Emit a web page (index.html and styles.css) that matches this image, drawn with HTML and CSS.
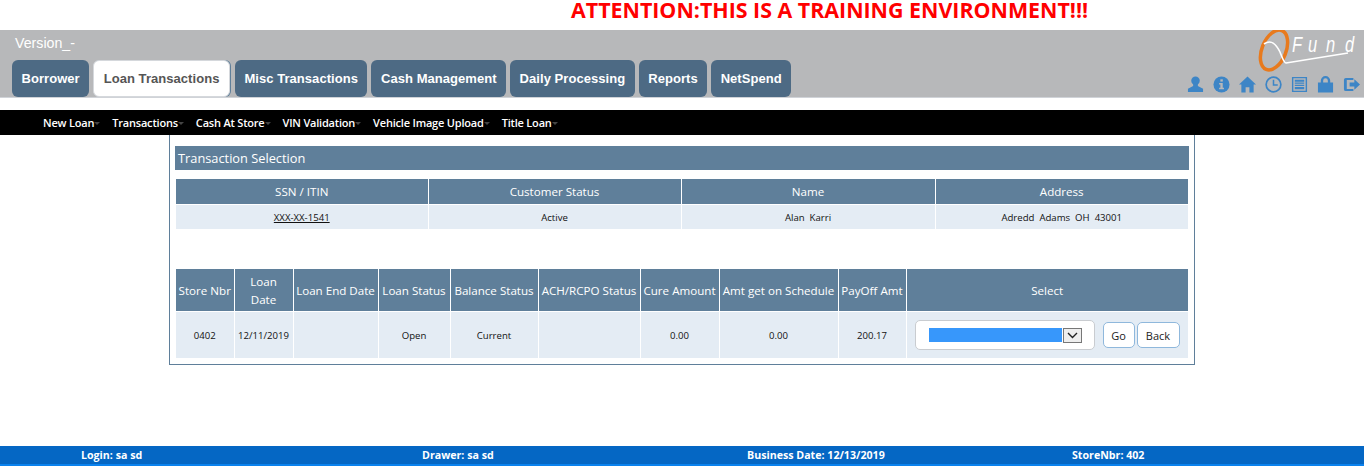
FILE: index.html
```html
<!DOCTYPE html>
<html lang="en">
<head>
    <meta charset="UTF-8">
    <title>QFund - Transaction Selection</title>
    <link rel="stylesheet" href="styles.css">
</head>
<body>
    <div class="banner">ATTENTION:THIS IS A TRAINING ENVIRONMENT!!!</div>
    <header class="top-bar">
        <div class="top-left">
            <div class="version">Version_-</div>
            <nav class="tabs">
                <a class="tab">Borrower</a>
                <a class="tab tab-active">Loan Transactions</a>
                <a class="tab">Misc Transactions</a>
                <a class="tab">Cash Management</a>
                <a class="tab">Daily Processing</a>
                <a class="tab">Reports</a>
                <a class="tab">NetSpend</a>
            </nav>
        </div>
        <div class="top-right">
            <svg class="logo" width="106" height="43" viewBox="0 0 106 43">
                <ellipse cx="16" cy="20" rx="12" ry="21" transform="rotate(22 16 20)" fill="none" stroke="#e87a1d" stroke-width="3.5"/>
                <path d="M6 14 C13 9 18 14 22 22 C24 27 26 33 28 33 L90 23" fill="none" stroke="#fff" stroke-width="1.6"/>
                <g class="logo-text">
                    <text x="0" y="22" transform="translate(34 0) scale(.75 1)">F</text>
                    <text x="0" y="22" transform="translate(50 0) scale(.75 1)">u</text>
                    <text x="0" y="22" transform="translate(68 0) scale(.75 1)">n</text>
                    <text x="0" y="22" transform="translate(87 0) scale(.75 1)">d</text>
                </g>
            </svg>
            <div class="icons">
                <svg width="17" height="17" viewBox="0 0 18 18"><circle cx="9" cy="5" r="4.5"/><path d="M6.5 8h5v2.500l5.500 3V17H1v-3.500l5.500-3z"/></svg>
                <svg width="17" height="17" viewBox="0 0 18 18"><circle cx="9" cy="9" r="8.500"/><rect x="7.800" y="3.500" width="2.600" height="2.400" fill="#b7b8ba"/><path d="M6.500 7.500h3.800v5h1.300V14H6.500v-1.500h1.300V9H6.500z" fill="#b7b8ba"/></svg>
                <svg width="17" height="17" viewBox="0 0 18 18"><path d="M9 .5L18 9h-2.500v8.500H11v-5.500H7v5.500H2.500V9H0z"/></svg>
                <svg width="17" height="17" viewBox="0 0 18 18"><circle cx="9" cy="9" r="7.800" fill="none" stroke="#3d85c6" stroke-width="1.800"/><path d="M8.200 4h1.600v4.800h3.700v1.600H8.200z"/></svg>
                <svg width="17" height="17" viewBox="0 0 18 18"><path fill-rule="evenodd" d="M1 1h16v16H1zM2.500 2.500v13h13v-13z"/><path d="M4 4h10v2H4zM4 7h10v1.200H4zM4 9.300h10v1.200H4zM4 11.600h10V14H4z"/></svg>
                <svg width="17" height="17" viewBox="0 0 18 18"><path fill-rule="evenodd" d="M1 7h3V5a5 5 0 0 1 10 0v2h3v10.500H1zM6.500 7h5V5a2.500 2.500 0 0 0-5 0z"/></svg>
                <svg width="17" height="17" viewBox="0 0 18 18"><path d="M3 2h8v2.200H4v9.600h7V16H3a2 2 0 0 1-2-2V4a2 2 0 0 1 2-2z"/><path d="M7 7h5V3.500L18 9l-6 5.500V11H7z"/></svg>
            </div>
        </div>
    </header>
    <nav class="sub-nav">
        <a class="sub-link">New Loan</a>
        <a class="sub-link">Transactions</a>
        <a class="sub-link">Cash At Store</a>
        <a class="sub-link">VIN Validation</a>
        <a class="sub-link">Vehicle Image Upload</a>
        <a class="sub-link">Title Loan</a>
    </nav>
    <main class="panel">
        <h1 class="panel-title">Transaction Selection</h1>
        <table class="grid customer-grid">
            <colgroup>
                <col class="c-ssn"><col class="c-cust"><col class="c-name"><col>
            </colgroup>
            <thead>
                <tr>
                    <th>SSN / ITIN</th>
                    <th>Customer Status</th>
                    <th>Name</th>
                    <th>Address</th>
                </tr>
            </thead>
            <tbody>
                <tr>
                    <td><a class="ssn">XXX-XX-1541</a></td>
                    <td>Active</td>
                    <td>Alan&nbsp;&nbsp;Karri</td>
                    <td>Adredd&nbsp;&nbsp;Adams&nbsp;&nbsp;OH&nbsp;&nbsp;43001</td>
                </tr>
            </tbody>
        </table>
        <table class="grid loan-grid">
            <colgroup>
                <col class="c-store"><col class="c-date"><col class="c-end"><col class="c-status"><col class="c-balance">
                <col class="c-ach"><col class="c-cure"><col class="c-amt"><col class="c-payoff"><col>
            </colgroup>
            <thead>
                <tr>
                    <th>Store Nbr</th>
                    <th>Loan<br>Date</th>
                    <th>Loan End Date</th>
                    <th>Loan Status</th>
                    <th>Balance Status</th>
                    <th>ACH/RCPO Status</th>
                    <th>Cure Amount</th>
                    <th>Amt get on Schedule</th>
                    <th>PayOff Amt</th>
                    <th>Select</th>
                </tr>
            </thead>
            <tbody>
                <tr>
                    <td>0402</td>
                    <td>12/11/2019</td>
                    <td></td>
                    <td>Open</td>
                    <td>Current</td>
                    <td></td>
                    <td>0.00</td>
                    <td>0.00</td>
                    <td>200.17</td>
                    <td>
                        <div class="actions">
                            <div class="select-box">
                                <span class="select-value"></span>
                                <span class="select-arrow"><svg width="11" height="7" viewBox="0 0 11 7"><path d="M1 1l4.500 4.500L10 1" fill="none" stroke="#222" stroke-width="1.400"/></svg></span>
                            </div>
                            <button class="btn btn-go">Go</button>
                            <button class="btn btn-back">Back</button>
                        </div>
                    </td>
                </tr>
            </tbody>
        </table>
    </main>
    <footer class="status-bar">
        <span>Login: sa sd</span>
        <span>Drawer: sa sd</span>
        <span>Business Date: 12/13/2019</span>
        <span>StoreNbr: 402</span>
    </footer>
</body>
</html>
```

FILE: styles.css
```css
html, body {
    height: 100%;
}
body {
    margin: 0;
    display: flex;
    flex-direction: column;
    font-family: "Open Sans", sans-serif;
    background: #fff;
    overflow: hidden;
}
.banner {
    height: 30px;
    padding-left: 571px;
    color: #f00;
    font-size: 21.4px;
    font-weight: 700;
    line-height: 20px;
    white-space: nowrap;
}
.top-bar {
    height: 68px;
    display: flex;
    justify-content: space-between;
    background: #b7b8ba;
    border-bottom: 1px solid #d0d3d8;
    box-sizing: border-box;
}
.top-left {
    padding-left: 12px;
}
.version {
    height: 30px;
    padding: 5px 0 0 3px;
    box-sizing: border-box;
    color: #fff;
    font-family: "Liberation Sans", sans-serif;
    font-size: 14.2px;
}
.tabs {
    display: flex;
    gap: 4px;
}
.tab {
    height: 37px;
    padding: 0 9.5px;
    display: flex;
    align-items: center;
    box-sizing: border-box;
    background: #4d6a84;
    border-radius: 6px;
    color: #fff;
    font-family: "Liberation Sans", sans-serif;
    font-size: 13px;
    font-weight: 700;
    letter-spacing: 0.05px;
}
.tab-active {
    margin-right: 1px;
    background: #fff;
    color: #555;
    border: 1px solid #d5d8dc;
    box-shadow: 1px 0 0 #5f7f9a;
}
.top-right {
    width: 178px;
    display: flex;
    flex-direction: column;
    align-items: flex-end;
}
.logo {
    display: block;
    flex: none;
}
.logo-text {
    fill: #fff;
    font-family: "Liberation Sans", sans-serif;
    font-size: 22px;
    font-style: italic;
}
.icons {
    display: flex;
    gap: 9px;
    padding: 3px 4px 0 0;
}
.icons svg {
    fill: #3d85c6;
}
.sub-nav {
    height: 25px;
    margin-top: 12px;
    padding-left: 43px;
    display: flex;
    align-items: center;
    gap: 18px;
    background: #000;
}
.sub-link {
    position: relative;
    color: #fff;
    font-size: 11px;
    font-weight: 600;
    letter-spacing: -0.2px;
}
.sub-link::after {
    content: "";
    position: absolute;
    left: 100%;
    top: 7px;
    border: 3px solid transparent;
    border-top-color: #444;
}
.panel {
    width: 1026px;
    height: 230px;
    margin-left: 169px;
    padding: 11px 5px 0;
    box-sizing: border-box;
    border: 1px solid #5f7f9a;
    border-top: 0;
}
.panel-title {
    height: 24px;
    margin: 0 0 9px;
    padding-left: 3px;
    background: #5f7f9a;
    color: #fff;
    font-size: 12.8px;
    font-weight: 400;
    line-height: 25px;
}
.grid {
    width: 1012px;
    margin-left: 1px;
    border-collapse: collapse;
    table-layout: fixed;
    font-size: 9.6px;
    color: #111;
}
.grid th {
    background: #5f7f9a;
    color: #fff;
    font-size: 11.6px;
    font-weight: 400;
    text-align: center;
    border-left: 1px solid #fff;
    border-bottom: 1px solid #fff;
    padding: 0 1px;
}
.grid td {
    background: #e4ecf4;
    text-align: center;
    border-left: 1px solid #fff;
    padding: 0;
}
.grid th:first-child, .grid td:first-child {
    border-left: 0;
}
.customer-grid {
    margin-bottom: 40px;
}
.customer-grid th {
    height: 25px;
}
.customer-grid td {
    height: 24px;
}
.ssn {
    color: #111;
    text-decoration: underline;
}
.loan-grid th {
    height: 41px;
    padding-top: 1px;
    line-height: 18px;
}
.loan-grid td {
    height: 46px;
}
.c-ssn { width: 252px; }
.c-cust { width: 253px; }
.c-name { width: 254px; }
.c-store { width: 58px; }
.c-date { width: 59px; }
.c-end { width: 85px; }
.c-status { width: 72px; }
.c-balance { width: 88px; }
.c-ach { width: 102px; }
.c-cure { width: 79px; }
.c-amt { width: 119px; }
.c-payoff { width: 68px; }
.actions {
    display: flex;
    align-items: center;
    padding-left: 8px;
}
.select-box {
    width: 180px;
    height: 30px;
    padding-left: 13px;
    display: flex;
    align-items: center;
    gap: 1px;
    box-sizing: border-box;
    background: #fff;
    border: 1px solid #c9ccd0;
    border-radius: 5px;
}
.select-value {
    width: 133px;
    height: 14px;
    background: #3797fb;
}
.select-arrow {
    width: 19px;
    height: 15px;
    display: flex;
    align-items: center;
    justify-content: center;
    box-sizing: border-box;
    background: #eee;
    border: 1px solid #777;
}
.btn {
    height: 26px;
    padding: 0;
    background: #fff;
    border: 1px solid #8fb8dc;
    border-radius: 5px;
    color: #222;
    font-family: "Open Sans", sans-serif;
    font-size: 11px;
}
.btn-go {
    width: 32px;
    margin: 0 2px 0 8px;
}
.btn-back {
    width: 43px;
}
.status-bar {
    margin-top: auto;
    height: 20px;
    display: grid;
    grid-template-columns: 341px 325px 325px 1fr;
    padding-left: 81px;
    align-items: center;
    box-sizing: border-box;
    background: #0567c4;
    border-bottom: 2px solid #0a82ee;
    color: #fff;
    font-size: 10.65px;
    font-weight: 700;
}
```
